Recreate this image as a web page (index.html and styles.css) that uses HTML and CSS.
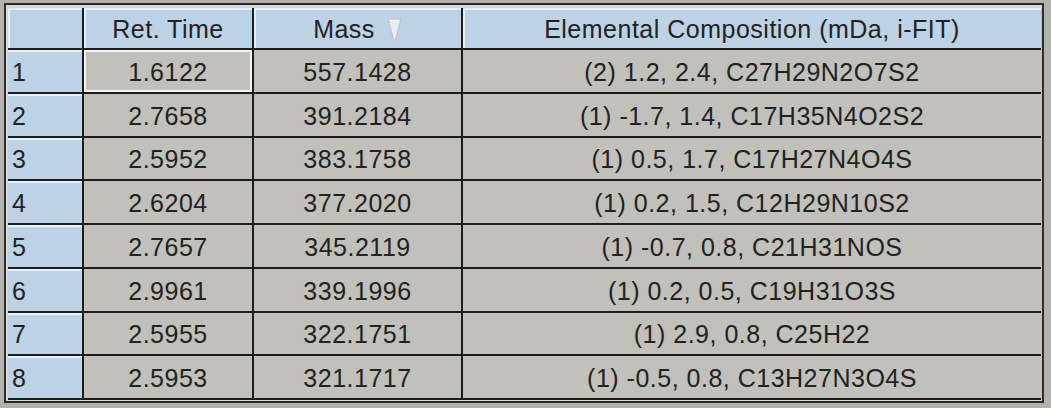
FILE: index.html
```html
<!DOCTYPE html>
<html>
<head>
<meta charset="utf-8">
<link rel="stylesheet" href="styles.css">
</head>
<body>
<div class="frame">
  <div class="inner">
    <div class="grid">
      <div class="hcell corner"></div>
      <div class="hcell">Ret. Time</div>
      <div class="hcell">Mass<svg class="sort" width="15" height="25" viewBox="0 0 15 25"><path d="M1 2 H14 L8.5 23 H6.5 Z" fill="#e9eef3" stroke="#c3c7cb" stroke-width="1.4" stroke-linejoin="round"/><path d="M3 3.5 H12" stroke="#ffffff" stroke-width="1.2"/></svg></div>
      <div class="hcell last">Elemental Composition (mDa, i-FIT)</div>

      <div class="rh">1</div><div class="cell sel">1.6122</div><div class="cell">557.1428</div><div class="cell last">(2) 1.2, 2.4, C27H29N2O7S2</div>
      <div class="rh">2</div><div class="cell">2.7658</div><div class="cell">391.2184</div><div class="cell last">(1) -1.7, 1.4, C17H35N4O2S2</div>
      <div class="rh">3</div><div class="cell">2.5952</div><div class="cell">383.1758</div><div class="cell last">(1) 0.5, 1.7, C17H27N4O4S</div>
      <div class="rh">4</div><div class="cell">2.6204</div><div class="cell">377.2020</div><div class="cell last">(1) 0.2, 1.5, C12H29N10S2</div>
      <div class="rh">5</div><div class="cell">2.7657</div><div class="cell">345.2119</div><div class="cell last">(1) -0.7, 0.8, C21H31NOS</div>
      <div class="rh">6</div><div class="cell">2.9961</div><div class="cell">339.1996</div><div class="cell last">(1) 0.2, 0.5, C19H31O3S</div>
      <div class="rh">7</div><div class="cell">2.5955</div><div class="cell">322.1751</div><div class="cell last">(1) 2.9, 0.8, C25H22</div>
      <div class="rh">8</div><div class="cell">2.5953</div><div class="cell">321.1717</div><div class="cell last">(1) -0.5, 0.8, C13H27N3O4S</div>
    </div>
  </div>
</div>
</body>
</html>
```

FILE: styles.css
```css
html, body {
  margin: 0;
  padding: 0;
}
body {
  background: #b3b2ad;
  width: 1051px;
  height: 408px;
  overflow: hidden;
  font-family: "Liberation Sans", Arial, sans-serif;
  color: #222222;
}
.frame {
  margin: 3px 7px 0 4px;
  border: 2px solid #2c2c2a;
  background: #d8d8d4;
  padding: 3px 0 1px 2px;
}
.inner {
  background: #c1c0bb;
}
.grid {
  display: grid;
  grid-template-columns: 76px 170px 209px 578px;
  grid-template-rows: 42px repeat(8, 43.75px);
  font-size: 25px;
  letter-spacing: 0.5px;
}
.hcell, .rh, .cell {
  border-right: 2px solid #1c1c1c;
  border-bottom: 2px solid #1c1c1c;
  display: flex;
  align-items: center;
  white-space: nowrap;
  box-sizing: border-box;
}
.last {
  border-right: 0;
}
.hcell {
  background: #bdd2e5;
  justify-content: center;
  box-shadow: inset 2px 2px 0 #e4eef7;
  padding-top: 2px;
}
.sort {
  margin-left: 12px;
}
.rh {
  background: #bdd2e5;
  padding: 3px 0 0 4px;
  box-shadow: inset 0 2px 0 #eaf2f9;
}
.cell {
  background: #c1c0bb;
  justify-content: center;
  padding-top: 3px;
}
.cell.sel {
  box-shadow: inset 0 0 0 2px #f4f4f2;
}
```
